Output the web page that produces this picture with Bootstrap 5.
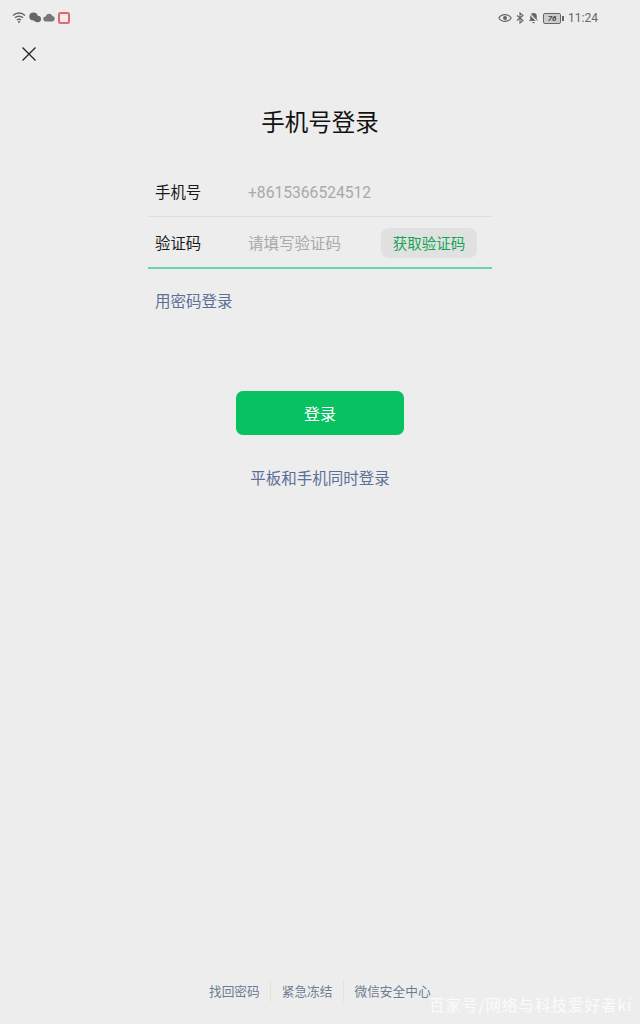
<!DOCTYPE html>
<html lang="zh-CN">
<head>
  <meta charset="UTF-8">
  <title>手机号登录</title>
  <link href="https://cdn.jsdelivr.net/npm/bootstrap@5.3.0/dist/css/bootstrap.min.css" rel="stylesheet">
  <style>
    body { background: #ededed; font-family: "Noto Sans CJK SC", "Noto Sans", sans-serif; color: #1a1a1a; }
    .screen { height: 1024px; overflow: hidden; position: relative; }
    .status-bar { height: 36px; padding: 11px 42px 0 12px; color: #666; }
    .status-left { gap: 2.5px; }
    .status-time { font-size: 12px; line-height: 14px; font-family: Roboto, sans-serif; color: #666; }
    .batt { width: 18px; height: 11px; border: 1px solid #666; border-radius: 2px; font-size: 8px; line-height: 9px; font-weight: 700; font-style: italic; text-align: center; background: #ccc; font-family: Roboto, sans-serif; color: #444; }
    .batt-tip { width: 2px; height: 5px; margin-left: 1px; background: #666; }
    .close-row { height: 36px; padding-left: 21px; }
    .page-title { font-size: 23.5px; line-height: 32px; font-weight: 400; margin: 33px 0 29px; color: #111; }
    .login-form { width: 344px; }
    .form-line { height: 51px; padding: 2px 15px 0 7px; border-bottom: 1px solid #dedede; font-size: 15.4px; }
    .form-line.active-line { height: 52px; border-bottom: 2px solid #62d6aa; }
    .form-label-text { width: 93px; color: #1a1a1a; }
    .form-hint { color: #a9a9a9; font-size: 15.5px; }
    .form-hint.phone-hint { font-family: Roboto, sans-serif; font-size: 15.65px; padding-top: 2px; }
    .code-btn { width: 96px; height: 30px; padding: 0; border: 0; border-radius: 8px; background: #e1e1e1; color: #12a556; font-size: 14.5px; }
    .link-blue { color: #5c6f99; }
    .pw-link { font-size: 15.5px; line-height: 22px; margin: 20px 0 0 7px; }
    .btn-login { display: block; width: 168px; height: 44px; margin: 80px auto 0; padding: 0; border: 0; border-radius: 7px; background: #08c160; color: #fff; font-size: 16px; }
    .btn-login:hover { background: #08c160; color: #fff; }
    .both-link { font-size: 15.5px; line-height: 22px; margin-top: 31px; }
    .foot-links { position: absolute; left: 198.5px; bottom: 22px; font-size: 12.7px; color: #6f7b96; }
    .foot-links span { padding: 0 10.5px; line-height: 22px; }
    .foot-links span + span { border-left: 1px solid #e2e2e2; }
    .watermark { position: absolute; left: 429px; top: 994px; font-size: 15.5px; line-height: 20px; letter-spacing: 1px; color: rgba(255,255,255,.82); white-space: nowrap; }
  </style>
</head>
<body>
  <div class="screen">
    <div class="status-bar d-flex justify-content-between align-items-start">
      <div class="d-flex align-items-center status-left">
        <svg width="14" height="13" viewBox="0 0 14 13" fill="none" stroke="#666" stroke-width="1.5"><path d="M1 4.500a8.500 8.500 0 0 1 12 0M3 6.800a5.700 5.700 0 0 1 8 0M5 9a2.800 2.800 0 0 1 4 0"/><circle cx="7" cy="11" r="1" fill="#666" stroke="none"/></svg>
        <svg width="12" height="11" viewBox="0 0 12 11" fill="#666"><ellipse cx="4.500" cy="4.500" rx="4.200" ry="4"/><ellipse cx="8.500" cy="7" rx="3.500" ry="3.300"/></svg>
        <svg width="12" height="9" viewBox="0 0 12 9" fill="#777"><path d="M3 8.500a2.500 2.500 0 0 1-.4-5A3.600 3.600 0 0 1 9.400 3 2.800 2.800 0 0 1 9.500 8.500z"/></svg>
        <svg width="12" height="12" viewBox="0 0 12 12" fill="#fbeaea" stroke="#e0676f" stroke-width="2"><rect x="1" y="1" width="10" height="10" rx="1.500"/></svg>
      </div>
      <div class="d-flex align-items-center gap-1">
        <svg width="14" height="10" viewBox="0 0 14 10" fill="none" stroke="#666" stroke-width="1.2"><path d="M.8 5C3.500.5 10.500.5 13.200 5 10.500 9.500 3.500 9.500.8 5z"/><circle cx="7" cy="5" r="2" fill="#666" stroke="none"/></svg>
        <svg width="8" height="12" viewBox="0 0 8 12" fill="none" stroke="#666" stroke-width="1.1"><path d="M1 3.500 7 8.500 4 11V1L7 3.500 1 8.500"/></svg>
        <svg width="11" height="12" viewBox="0 0 11 12" fill="#666"><path d="M5.500 1a3.300 3.300 0 0 0-3.300 3.300V7.500L1 9h9L8.800 7.500V4.300A3.300 3.300 0 0 0 5.500 1z"/><path d="M4.300 10a1.200 1.200 0 0 0 2.400 0z"/><path d="M1 1l9.500 10" stroke="#ededed" stroke-width="1.200"/></svg>
        <div class="d-flex align-items-center">
          <div class="batt">76</div><div class="batt-tip"></div>
        </div>
        <div class="status-time">11:24</div>
      </div>
    </div>

    <div class="close-row d-flex align-items-center">
      <svg width="16" height="16" viewBox="0 0 16 16" stroke="#222" stroke-width="1.300" fill="none"><path d="M1.500 1.500l13 13M14.500 1.500l-13 13"/></svg>
    </div>

    <h1 class="page-title text-center">手机号登录</h1>

    <div class="login-form mx-auto">
      <div class="form-line d-flex align-items-center">
        <div class="form-label-text">手机号</div>
        <div class="form-hint phone-hint">+8615366524512</div>
      </div>
      <div class="form-line active-line d-flex align-items-center">
        <div class="form-label-text">验证码</div>
        <div class="form-hint flex-grow-1">请填写验证码</div>
        <button class="code-btn" type="button">获取验证码</button>
      </div>
      <div class="pw-link link-blue">用密码登录</div>
    </div>

    <button class="btn btn-login" type="button">登录</button>
    <div class="both-link link-blue text-center">平板和手机同时登录</div>

    <div class="foot-links d-flex">
      <span>找回密码</span><span>紧急冻结</span><span>微信安全中心</span>
    </div>
    <div class="watermark">百家号/网络与科技爱好者ki</div>
  </div>
  <script src="https://cdn.jsdelivr.net/npm/bootstrap@5.3.0/dist/js/bootstrap.bundle.min.js"></script>
</body>
</html>
